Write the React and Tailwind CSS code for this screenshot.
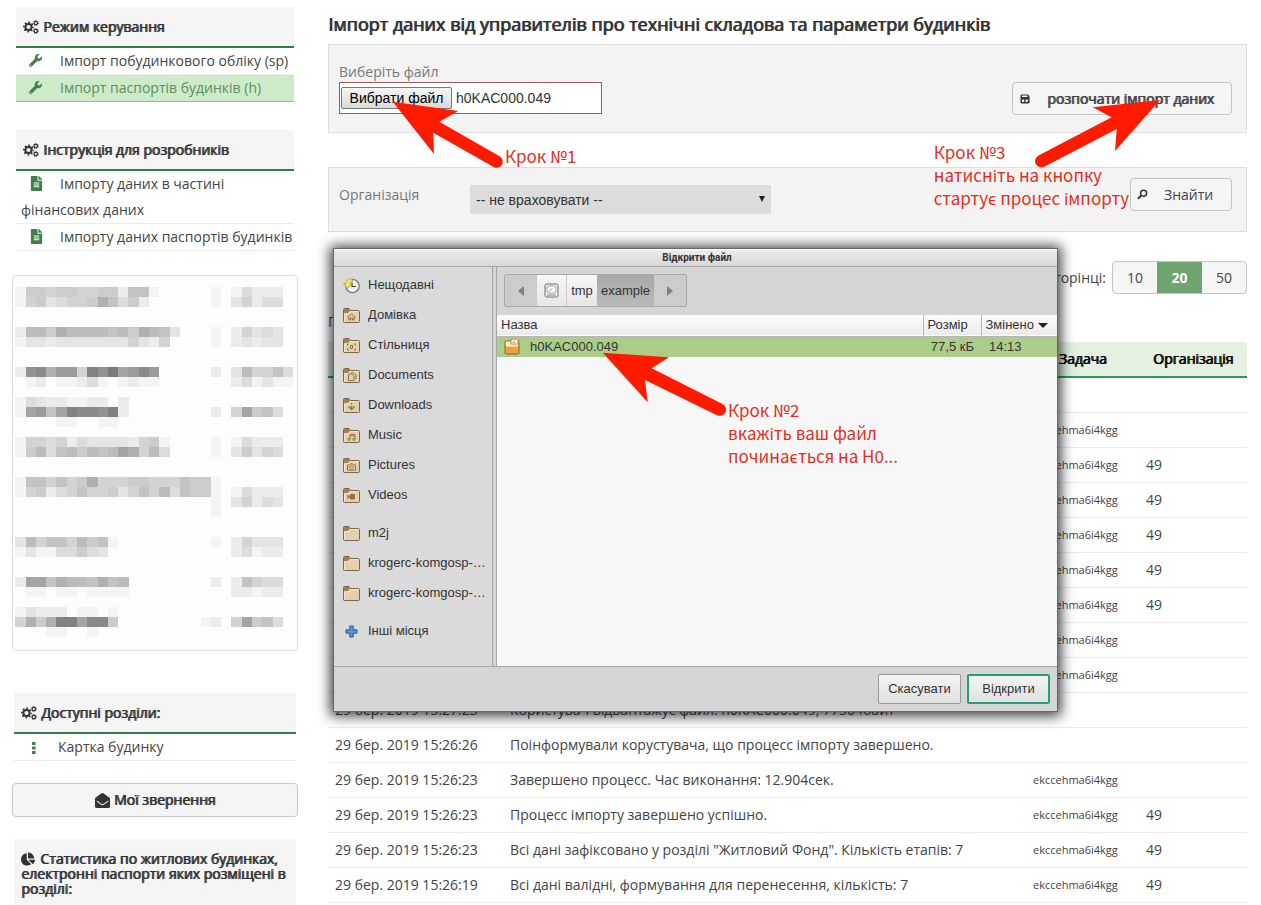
import { useId, useRef } from "react";
import { FaWrench, FaFileAlt, FaEnvelopeOpen, FaChartPie } from "react-icons/fa";

const SHADES = ["", "#f4f4f4", "#ececec", "#e4e4e4", "#dcdcdc", "#d3d3d3", "#cccccc", "#c3c3c3", "#bcbcbc", "#b0b0b0", "#a5a4a5", "#9c9a9b", "#949292", "#8c8a89", "#848281", "#7c7a7a"];

const MOSAIC = {
  0: "166566556627710000010142220",
  1: "156345569746200000010352440",
  4: "288698888786987300010253430",
  5: "133233333335325000010232330",
  8: "2cd9bb5ecfabdb0000020385574",
  9: "012011241012110000000241311",
  11: "14322112202",
  12: "1ab7aeddce200000000205a6740",
  13: "00001100110",
  15: "155452433332561000010142220",
  16: "1684786878a9584000010363540",
  19: "17757569555665557661",
  20: "156245755635758476610142220",
  21: "000000000000000000010352430",
  22: "00000000000000000001",
  25: "385775867100000000010253330",
  26: "131144643000000000000241220",
  29: "2aa798879780000000020275440",
  30: "011011011110000000000221220",
  32: "1322201101",
  33: "5969eeadd6000000001205a6740",
  34: "0001100100",
};

function Mosaic() {
  return (
    <svg viewBox="0 0 284 374" className="block h-auto w-full" shapeRendering="crispEdges" aria-hidden="true">
      <rect width="284" height="374" fill="#fdfdfd" />
      {Object.entries(MOSAIC).map(([row, cells]) =>
        [...cells].map((c, i) =>
          c === "0" ? null : (
            <rect key={`${row}-${i}`} x={2.3 + i * 10.29} y={10.6 + Number(row) * 10.02} width="10.4" height="10.1" fill={SHADES[parseInt(c, 16)]} />
          )
        )
      )}
    </svg>
  );
}

const HEAVY = "[text-shadow:1px_0_0_currentColor]";

const Gears = () => (
  <svg viewBox="0 0 16 16" className="h-4 w-4" fill="none" stroke="currentColor" aria-hidden="true">
    <circle cx="5.500" cy="8" r="3.100" strokeWidth="2" />
    <circle cx="5.500" cy="8" r="4.600" strokeWidth="1.600" strokeDasharray="1.800 1.813" strokeDashoffset="0.900" />
    <circle cx="12.800" cy="4" r="1.700" strokeWidth="1.200" />
    <circle cx="12.800" cy="4" r="2.600" strokeWidth="0.900" strokeDasharray="1.200 1.130" />
    <circle cx="12.800" cy="12" r="1.700" strokeWidth="1.200" />
    <circle cx="12.800" cy="12" r="2.600" strokeWidth="0.900" strokeDasharray="1.200 1.130" />
  </svg>
);

function Heading({ children }) {
  return (
    <h2 className={`flex h-[41px] items-center gap-1 border-b-2 border-[#2e8048] bg-[#f5f5f5] px-[7px] text-sm text-[#333] ${HEAVY}`}>
      <Gears />
      {children}
    </h2>
  );
}

function MenuItem({ icon, children, active }) {
  return (
    <li>
      <a
        href="#"
        className={
          active
            ? "block border-b border-[#8fbf8f] bg-[#cdebc8] pl-[5px] text-sm leading-[26px] text-[#5b8f5b]"
            : "block border-b border-[#ececec] pl-[5px] text-sm leading-[26px] text-[#444]"
        }
      >
        <span className="ml-2 mr-[17px] inline-block w-[14px] text-[#3f7f4a]">{icon}</span>
        {children}
      </a>
    </li>
  );
}

const Dots = () => (
  <svg viewBox="0 0 12 12" className="inline h-3 w-3" fill="currentColor">
    <rect x="5" y="0" width="3.6" height="3" rx="0.6" />
    <rect x="5" y="4.5" width="3.6" height="3" rx="0.6" />
    <rect x="5" y="9" width="3.6" height="3" rx="0.6" />
  </svg>
);

const wrench = <FaWrench size={13} className="inline align-[-1px]" />;
const doc = <FaFileAlt size={15} className="inline align-[-2px]" />;

function Sidebar() {
  return (
    <aside className="w-[286px] shrink-0 pt-[7px]">
      <nav className="mx-1">
        <Heading>Режим керування</Heading>
        <ul>
          <MenuItem icon={wrench}>Імпорт побудинкового обліку (sp)</MenuItem>
          <MenuItem icon={wrench} active>Імпорт паспортів будинків (h)</MenuItem>
        </ul>
      </nav>
      <nav className="mx-1 mt-7">
        <Heading>Інструкція для розробників</Heading>
        <ul>
          <MenuItem icon={doc}>Імпорту даних в частині фінансових даних</MenuItem>
          <MenuItem icon={doc}>Імпорту даних паспортів будинків</MenuItem>
        </ul>
      </nav>
      <div className="mt-6 overflow-hidden rounded border border-[#dcdcdc]">
        <Mosaic />
      </div>
      <nav className="mx-[2px] mt-[42px]">
        <Heading>Доступні розділи:</Heading>
        <ul>
          <MenuItem icon={<Dots />}>Картка будинку</MenuItem>
        </ul>
      </nav>
      <button type="button" className={`mt-[22px] flex h-[34px] w-full items-center justify-center gap-1 rounded border border-[#c8c8c8] bg-[#f5f5f5] text-sm text-[#333] ${HEAVY}`}>
        <FaEnvelopeOpen size={15} />
        Мої звернення
      </button>
      <h2 className={`mx-[2px] mt-[22px] bg-[#f5f5f5] px-[7px] pb-[9px] pt-3 text-sm leading-[15px] text-[#333] ${HEAVY}`}>
        <FaChartPie size={14} className="mr-[5px] inline align-[-2px]" />
        Статистика по житлових будинках, електронні паспорти яких розміщені в розділі:
      </h2>
    </aside>
  );
}

const SaveIcon = () => (
  <svg viewBox="0 0 10 10" className="h-[10px] w-[10px]">
    <path d="M1.500 0.500h6.500l1.500 1.500v6.500l-1 1h-7l-1-1v-7z" fill="#333" />
    <rect x="2" y="1.5" width="5.5" height="1.5" fill="#f5f5f5" />
    <rect x="2" y="5.5" width="2.200" height="2.500" fill="#f5f5f5" />
    <rect x="5.600" y="5.5" width="2.200" height="2.500" fill="#f5f5f5" />
  </svg>
);

const FindIcon = () => (
  <svg viewBox="0 0 11 11" className="h-[11px] w-[11px]" fill="none" stroke="#333">
    <circle cx="6.6" cy="4.2" r="3" strokeWidth="1.5" />
    <path d="M4.4 6.4 1 9.8" strokeWidth="2" />
  </svg>
);

function ImportForm() {
  const file = useRef(null);
  const id = useId();
  return (
    <form className="mt-2 flex items-end justify-between border border-[#ddd] bg-[#f3f3f3] pb-[17px] pl-[10px] pr-[14px] pt-[17px]">
      <div className="pb-px">
        <label htmlFor={id} className="block text-sm leading-5 text-[#777]">Виберіть файл</label>
        <div className="flex h-8 w-[263px] items-center gap-1 border border-[#9c5a60] bg-white pl-px font-['Liberation_Sans',sans-serif] text-sm text-[#333]">
          <input ref={file} id={id} type="file" className="sr-only" />
          <button type="button" onClick={() => file.current.click()} className="h-[22px] w-[111px] rounded-xs border border-[#777] bg-linear-to-b from-[#f6f6f6] to-[#dadada] leading-5 text-black">
            Вибрати файл
          </button>
          h0KAC000.049
        </div>
      </div>
      <button type="submit" className={`flex h-[33px] w-[220px] items-center gap-[17px] rounded border border-[#c4c4c4] bg-[#f5f5f5] pl-[7px] text-sm text-[#444] ${HEAVY}`}>
        <SaveIcon />
        розпочати імпорт даних
      </button>
    </form>
  );
}

function FilterForm() {
  const id = useId();
  return (
    <form className="mt-[34px] flex h-[65px] items-start border border-[#ddd] bg-[#f3f3f3] pl-[10px] pr-[14px] pt-[10px]">
      <label htmlFor={id} className="w-[131px] pt-[7px] text-sm leading-5 text-[#777]">Організація</label>
      <div className="relative mt-[7px] w-[301px]">
        <select id={id} className="block h-[29px] w-full appearance-none bg-[#dcdcdc] pl-[6px] font-['Liberation_Sans',sans-serif] text-sm text-[#333]">
          <option>-- не враховувати --</option>
        </select>
        <span className="pointer-events-none absolute right-[6px] top-[11px] border-x-[3px] border-t-[6px] border-x-transparent border-t-[#222]" />
      </div>
      <button type="submit" className="ml-auto flex h-[33px] w-[102px] items-center gap-4 rounded border border-[#c4c4c4] bg-[#f5f5f5] pl-[6px] text-sm text-[#444]">
        <FindIcon />
        Знайти
      </button>
    </form>
  );
}

const TASK = "ekccehma6i4kgg";
const ROWS = [
  ["", "", "", ""],
  ["", "", TASK, ""],
  ["", "", TASK, "49"],
  ["", "", TASK, "49"],
  ["", "", TASK, "49"],
  ["", "", TASK, "49"],
  ["", "", TASK, "49"],
  ["", "", TASK, ""],
  ["", "", TASK, ""],
  ["29 бер. 2019 15:27:23", "Користувач відвантажує файл: h0KAC000.049, 77504байт", "", ""],
  ["29 бер. 2019 15:26:26", "Поінформували корустувача, що процесс імпорту завершено.", "", ""],
  ["29 бер. 2019 15:26:23", "Завершено процесс. Час виконання: 12.904сек.", TASK, ""],
  ["29 бер. 2019 15:26:23", "Процесс імпорту завершено успішно.", TASK, "49"],
  ["29 бер. 2019 15:26:23", "Всі дані зафіксовано у розділі \"Житловий Фонд\". Кількість етапів: 7", TASK, "49"],
  ["29 бер. 2019 15:26:19", "Всі дані валідні, формування для перенесення, кількість: 7", TASK, "49"],
];

function LogTable() {
  return (
    <table className="w-full table-fixed border-collapse text-sm text-[#444]">
      <colgroup>
        <col className="w-[175px]" />
        <col />
        <col className="w-[113px]" />
        <col className="w-[108px]" />
      </colgroup>
      <thead>
        <tr className="h-[35px] border-b-2 border-[#24a052] bg-[#e5f0e1] text-black">
          <th />
          <th />
          <th className={`font-normal ${HEAVY}`}>Задача</th>
          <th className={`font-normal ${HEAVY}`}>Організація</th>
        </tr>
      </thead>
      <tbody>
        {ROWS.map((r, i) => (
          <tr key={i} className="h-[35px] border-b border-[#ececec]">
            <td className="whitespace-nowrap px-[7px]">{r[0]}</td>
            <td className="whitespace-nowrap px-[7px]">{r[1]}</td>
            <td className="px-[7px] text-[11px]">{r[2]}</td>
            <td className="px-[7px]">{r[3]}</td>
          </tr>
        ))}
      </tbody>
    </table>
  );
}

const glyphs = {
  home: <path d="M4.5 10.5 8.5 7l4 3.5M5.8 10v3h1.7v-2h2v2h1.7v-3" />,
  desktop: <path d="M4.5 8.5V7H6M11 7h1.5v1.5M12.500 11.500V13H11M6 13H4.500v-1.500M7.500 8.500h2v3h-2z" />,
  documents: <path d="M5.500 7h3.500l2 2v4.500h-5.500zM8 5.800h3l1.800 1.800v4.500" />,
  downloads: <path d="M8.500 6v1.500M8.500 8.700v3.500M5.500 9.500l3 3 3-3" strokeWidth="1.300" />,
  music: (
    <>
      <path d="M7 12V7.500h5V12M7 9h5" />
      <circle cx="6" cy="12.300" r="1.100" />
      <circle cx="11" cy="12.300" r="1.100" />
    </>
  ),
  pictures: <path d="M4.500 8h2l.8-1.200h2.400l.8 1.200h2v5.200h-8zM8.500 8.800a1.700 1.700 0 1 0 .01 0z" />,
  videos: <path d="M7.500 7.500h4v4.500h-4zM5 8l1.800 1.700L5 11.500z" fill="#8c7249" />,
  plain: null,
};

function FolderIcon({ kind }) {
  return (
    <svg viewBox="0 0 17 17" className="h-[17px] w-[17px]" fill="none">
      <path d="M0.500 14.500V2.500a1 1 0 0 1 1-1h4.500l1.500 2h8a1 1 0 0 1 1 1v10a1 1 0 0 1-1 1h-14a1 1 0 0 1-1-1z" fill="#e5d0ae" stroke="#7c6646" />
      <path d="M1 6V2h5l1.200 1.800L5 6z" fill="#9c8257" />
      <path d="M1.500 14.500V7h3.700l1.700-2.500h8.600" stroke="#f6ead6" strokeWidth="0.800" />
      <g stroke="#8c7249" strokeWidth="1">{glyphs[kind]}</g>
    </svg>
  );
}

const ClockIcon = () => (
  <svg viewBox="0 0 17 17" className="h-[17px] w-[17px]">
    <circle cx="9.500" cy="9" r="6.700" fill="#f1f1ee" stroke="#77776f" strokeWidth="1.300" />
    <path d="M9 5.500v4h4" fill="none" stroke="#333" strokeWidth="1.200" />
    <path d="M9 1.500C5 1.500 2.600 4 2.600 6.500H0.500l4 5 4.500-5H7C7 5.500 8 5 9.500 5z" fill="#f0e068" stroke="#b09c20" strokeWidth="0.700" />
  </svg>
);

const PlusIcon = () => (
  <svg viewBox="0 0 17 17" className="h-[17px] w-[17px]">
    <path d="M6.800 3h3.400v3.800H14v3.400h-3.800V14H6.800v-3.800H3V6.800h3.800z" fill="#5e93cf" stroke="#2a5c9c" />
  </svg>
);

const DriveIcon = () => (
  <svg viewBox="0 0 15 15" className="h-[15px] w-[15px]" fill="none">
    <rect x="1" y="1" width="13" height="13" rx="1.500" fill="#ededed" stroke="#6f6f6f" />
    <rect x="3" y="3" width="9" height="7" rx="2.500" fill="#fafafa" stroke="#a5a5a5" />
    <path d="M5 8.500l3-3M3 12h9" stroke="#888" />
  </svg>
);

const PackageIcon = () => (
  <svg viewBox="0 0 16 17" className="h-[17px] w-4">
    <rect x="1" y="3" width="14" height="13" rx="1.300" fill="#e6a04a" stroke="#9a6118" />
    <path d="M1.800 3.600h12.400V8H1.800z" fill="#fbe9c8" />
    <path d="M7 1h5.500L14 2.500V6H7z" fill="#fff" stroke="#a87428" strokeWidth="0.800" />
    <path d="M8.500 3h3M8.500 4.500h3" stroke="#b88a40" strokeWidth="0.700" />
    <path d="M2 8.500h12" stroke="#f7cf8c" />
  </svg>
);

const PLACES = [
  [
    ["Нещодавні", "clock"],
    ["Домівка", "home"],
    ["Стільниця", "desktop"],
    ["Documents", "documents"],
    ["Downloads", "downloads"],
    ["Music", "music"],
    ["Pictures", "pictures"],
    ["Videos", "videos"],
  ],
  [
    ["m2j", "plain"],
    ["krogerc-komgosp-…", "plain"],
    ["krogerc-komgosp-…", "plain"],
  ],
  [["Інші місця", "plus"]],
];

function PlaceIcon({ kind }) {
  if (kind === "clock") return <ClockIcon />;
  if (kind === "plus") return <PlusIcon />;
  return <FolderIcon kind={kind} />;
}

function FileDialog() {
  return (
    <section role="dialog" aria-label="Відкрити файл" className="absolute left-[333px] top-[248px] flex h-[464px] w-[725px] flex-col border border-[#666] bg-[#d5d5d5] font-['Liberation_Sans',sans-serif] text-[13px] text-[#333] shadow-[0_1px_12px_3px_rgba(0,0,0,0.75)]">
      <header className="h-[17px] border-t border-white bg-linear-to-b from-[#ececec] to-[#d8d8d8] pl-[3px] text-center font-[Roboto,sans-serif] text-[10px] font-bold leading-4">Відкрити файл</header>
      <div className="flex h-[401px] shrink-0 gap-[3px] border-y border-[#a8a8a8]">
        <nav className="flex w-[159px] shrink-0 flex-col gap-2 border-r border-[#a8a8a8] bg-[#dadada] pt-[3px]">
          {PLACES.map((group, g) => (
            <ul key={g}>
              {group.map(([name, kind], i) => (
                <li key={i}>
                  <button type="button" className="flex h-[30px] w-full items-center gap-2 whitespace-nowrap pl-[9px]">
                    <PlaceIcon kind={kind} />
                    {name}
                  </button>
                </li>
              ))}
            </ul>
          ))}
        </nav>
        <div className="flex min-w-0 flex-1 flex-col border-l border-[#a8a8a8]">
          <div className="h-[48px] pl-[7px] pt-[7px]">
            <div className="flex h-[33px] w-[183px] overflow-hidden rounded-xs border border-[#a8a8a8] bg-[#cbcbcb]">
              <button type="button" aria-label="Назад" className="flex w-8 items-center justify-center">
                <span className="border-y-[5px] border-r-[6px] border-y-transparent border-r-[#808080]" />
              </button>
              <button type="button" aria-label="Диск" className="flex w-[30px] items-center justify-center border-r border-[#ccc] bg-linear-to-b from-[#f6f6f6] to-[#e6e6e6]"><DriveIcon /></button>
              <button type="button" className="w-[30px] bg-linear-to-b from-[#f6f6f6] to-[#e6e6e6]">tmp</button>
              <button type="button" className="w-[57px] bg-linear-to-b from-[#a9a9a9] to-[#b9b9b9]">example</button>
              <button type="button" aria-label="Вперед" className="flex w-8 items-center justify-center">
                <span className="border-y-[5px] border-l-[6px] border-y-transparent border-l-[#808080]" />
              </button>
            </div>
          </div>
          <div className="flex-1 bg-[#f7f7f7]">
            <table className="w-full table-fixed border-collapse">
              <colgroup>
                <col />
                <col className="w-[58px]" />
                <col className="w-[76px]" />
              </colgroup>
              <thead>
                <tr className="h-[21px] border-b border-[#b5b5b5] bg-linear-to-b from-[#fdfdfd] to-[#ebebeb] text-left">
                  <th className="pl-1 font-normal leading-4">Назва</th>
                  <th className="border-l border-[#b5b5b5] pl-1 font-normal leading-4">Розмір</th>
                  <th className="whitespace-nowrap border-l border-[#b5b5b5] pl-1 font-normal leading-4">
                    Змінено
                    <span className="ml-1 inline-block border-x-[5px] border-t-[5px] border-x-transparent border-t-[#222] align-middle" />
                  </th>
                </tr>
              </thead>
              <tbody>
                <tr className="h-[21px] bg-[#accd8a]">
                  <td className="pl-[7px] leading-4">
                    <span className="flex items-center gap-[10px]"><PackageIcon />h0KAC000.049</span>
                  </td>
                  <td className="whitespace-nowrap pr-[7px] text-right leading-4">77,5 кБ</td>
                  <td className="pl-2 leading-4">14:13</td>
                </tr>
              </tbody>
            </table>
          </div>
        </div>
      </div>
      <footer className="flex flex-1 items-center justify-end gap-[6px] pr-[7px]">
        <button type="button" className="h-[30px] w-[83px] rounded-xs border border-[#999] bg-linear-to-b from-[#f5f5f5] to-[#e0e0e0]">Скасувати</button>
        <button type="button" className="h-[30px] w-[83px] rounded-xs border-2 border-[#22a078] bg-linear-to-b from-[#f5f5f5] to-[#e0e0e0]">Відкрити</button>
      </footer>
    </section>
  );
}

const NOTE = "pointer-events-none absolute whitespace-pre font-['Noto_Sans_CJK_SC','Noto_Sans',sans-serif] text-[17px] leading-[23px] text-[#e0301e]";

function Annotations() {
  return (
    <>
      <svg viewBox="0 0 116 72" className="pointer-events-none absolute left-[390px] top-[98px] h-[72px] w-[116px]">
        <path d="M2.700 3.700 68.300 13 49.300 23.700 110 58.500a6.200 6.200 0 0 1-6 10.800L43.300 34.700 44 56z" fill="#ff1a00" />
      </svg>
      <p className={`${NOTE} left-[505px] top-[144px]`}>Крок №1</p>
      <svg viewBox="0 0 128 70" className="pointer-events-none absolute left-[600px] top-[350px] h-[70px] w-[128px]">
        <path d="M2.700 2.700 69 7.300 51.700 18.300 122.500 54a6.200 6.200 0 0 1-5.500 11.200L45 30 47.700 52.300z" fill="#ff1a00" />
      </svg>
      <p className={`${NOTE} left-[728px] top-[398px]`}>{"Крок №2\nвкажіть ваш файл\nпочинається на H0..."}</p>
      <svg viewBox="0 0 130 72" className="pointer-events-none absolute right-[98px] top-[98px] h-[72px] w-[130px]">
        <path d="M127 2 59.700 9.300 78.700 19.300 5.500 57.500a6.200 6.200 0 0 0 5.800 11.200L83.700 31 82 53z" fill="#ff1a00" />
      </svg>
      <p className={`${NOTE} right-[132px] top-[140px]`}>{"Крок №3\nнатисніть на кнопку\nстартує процес імпорту"}</p>
    </>
  );
}

export default function App() {
  return (
    <div className="relative flex gap-[30px] bg-white pl-3 pr-[14px] font-['Open_Sans',sans-serif]">
      <Sidebar />
      <main className="min-w-0 flex-1">
        <h1 className={`pt-3 text-lg leading-6 text-[#333] ${HEAVY}`}>Імпорт даних від управителів про технічні складова та параметри будинків</h1>
        <ImportForm />
        <FilterForm />
        <div className="mt-[29px] flex items-center justify-end gap-[6px] text-sm text-[#444]">
          <span>на сторінці:</span>
          <div className="flex h-[33px] overflow-hidden rounded border border-[#c4c4c4] bg-[#f5f5f5]">
            <button type="button" className="w-11">10</button>
            <button type="button" className="w-[45px] bg-[#6fa370] font-bold text-white">20</button>
            <button type="button" className="w-11">50</button>
          </div>
        </div>
        <p className="mb-[10px] mt-[18px] text-sm leading-5 text-[#444]">П</p>
        <LogTable />
      </main>
      <FileDialog />
      <Annotations />
    </div>
  );
}
